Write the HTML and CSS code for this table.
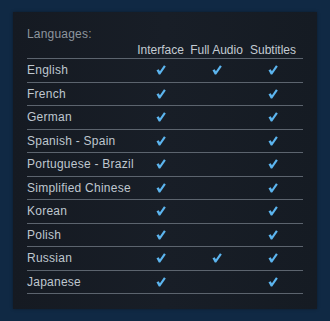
FILE: index.html
```html
<!DOCTYPE html>
<html>

<head>
    <title>Languages</title>
    <meta charset="UTF-8" />
    <link rel="stylesheet" href="styles.css">
</head>

<body>
    <svg width="0" height="0" class="defs">
        <symbol id="check" viewBox="0 0 10 10">
            <path d="M0.5 5.2 L2.7 4.2 L3.9 6.2 L8 0.3 L9.8 1.4 L4.2 9.6 L2.8 9.6 Z" />
        </symbol>
    </svg>

    <div class="languages">
        <div class="languages__title">Languages:</div>
        <div class="languages__row languages__row--head">
            <span></span>
            <span>Interface</span>
            <span>Full Audio</span>
            <span>Subtitles</span>
        </div>

        <!-- one row per language, check = supported -->
        <div class="languages__row">
            <span class="languages__name">English</span>
            <span><svg class="check"><use href="#check" /></svg></span>
            <span><svg class="check"><use href="#check" /></svg></span>
            <span><svg class="check"><use href="#check" /></svg></span>
        </div>
        <div class="languages__row">
            <span class="languages__name">French</span>
            <span><svg class="check"><use href="#check" /></svg></span>
            <span></span>
            <span><svg class="check"><use href="#check" /></svg></span>
        </div>
        <div class="languages__row">
            <span class="languages__name">German</span>
            <span><svg class="check"><use href="#check" /></svg></span>
            <span></span>
            <span><svg class="check"><use href="#check" /></svg></span>
        </div>
        <div class="languages__row">
            <span class="languages__name">Spanish - Spain</span>
            <span><svg class="check"><use href="#check" /></svg></span>
            <span></span>
            <span><svg class="check"><use href="#check" /></svg></span>
        </div>
        <div class="languages__row">
            <span class="languages__name">Portuguese - Brazil</span>
            <span><svg class="check"><use href="#check" /></svg></span>
            <span></span>
            <span><svg class="check"><use href="#check" /></svg></span>
        </div>
        <div class="languages__row">
            <span class="languages__name">Simplified Chinese</span>
            <span><svg class="check"><use href="#check" /></svg></span>
            <span></span>
            <span><svg class="check"><use href="#check" /></svg></span>
        </div>
        <div class="languages__row">
            <span class="languages__name">Korean</span>
            <span><svg class="check"><use href="#check" /></svg></span>
            <span></span>
            <span><svg class="check"><use href="#check" /></svg></span>
        </div>
        <div class="languages__row">
            <span class="languages__name">Polish</span>
            <span><svg class="check"><use href="#check" /></svg></span>
            <span></span>
            <span><svg class="check"><use href="#check" /></svg></span>
        </div>
        <div class="languages__row">
            <span class="languages__name">Russian</span>
            <span><svg class="check"><use href="#check" /></svg></span>
            <span><svg class="check"><use href="#check" /></svg></span>
            <span><svg class="check"><use href="#check" /></svg></span>
        </div>
        <div class="languages__row">
            <span class="languages__name">Japanese</span>
            <span><svg class="check"><use href="#check" /></svg></span>
            <span></span>
            <span><svg class="check"><use href="#check" /></svg></span>
        </div>
    </div>
</body>

</html>
```

FILE: styles.css
```css
:root {
    --page-bg: #102944;
    --panel-bg: #161c25;
    --line: #5c646e;
    --text: #bfc7cf;
    --muted: #8d959e;
    --check: #5cb5ef;
}

body {
    margin: 0;
    padding: 12px 13px;
    background-color: var(--page-bg);
    font-family: "Liberation Sans", Arial, sans-serif;
    font-size: 12px;
}

.defs {
    position: absolute;
}

.languages {
    width: 276px;
    padding: 14px 14px 15px;
    background: linear-gradient(to right, #151a22, #181e27 50%, #151b23);
    box-shadow: 0 0 3px rgba(0, 0, 0, 0.35);
}

.languages__title {
    line-height: 16px;
    color: var(--muted);
    letter-spacing: 0.2px;
}

.languages__row {
    display: grid;
    grid-template-columns: 106px 55px 57px 56px;
    align-items: center;
    height: 22.5px;
    border-bottom: 1px solid var(--line);
    color: var(--text);
}

.languages__row>span {
    text-align: center;
    line-height: 0;
}

.languages__row--head {
    height: 16px;
    color: #c4cbd2;
}

.languages__row--head>span,
.languages__row>.languages__name {
    line-height: 16px;
    white-space: nowrap;
}

.languages__row>.languages__name {
    text-align: left;
    letter-spacing: 0.25px;
}

/* check mark: short left stroke plus long right stroke */
.check {
    width: 10px;
    height: 10px;
    fill: var(--check);
}
```
